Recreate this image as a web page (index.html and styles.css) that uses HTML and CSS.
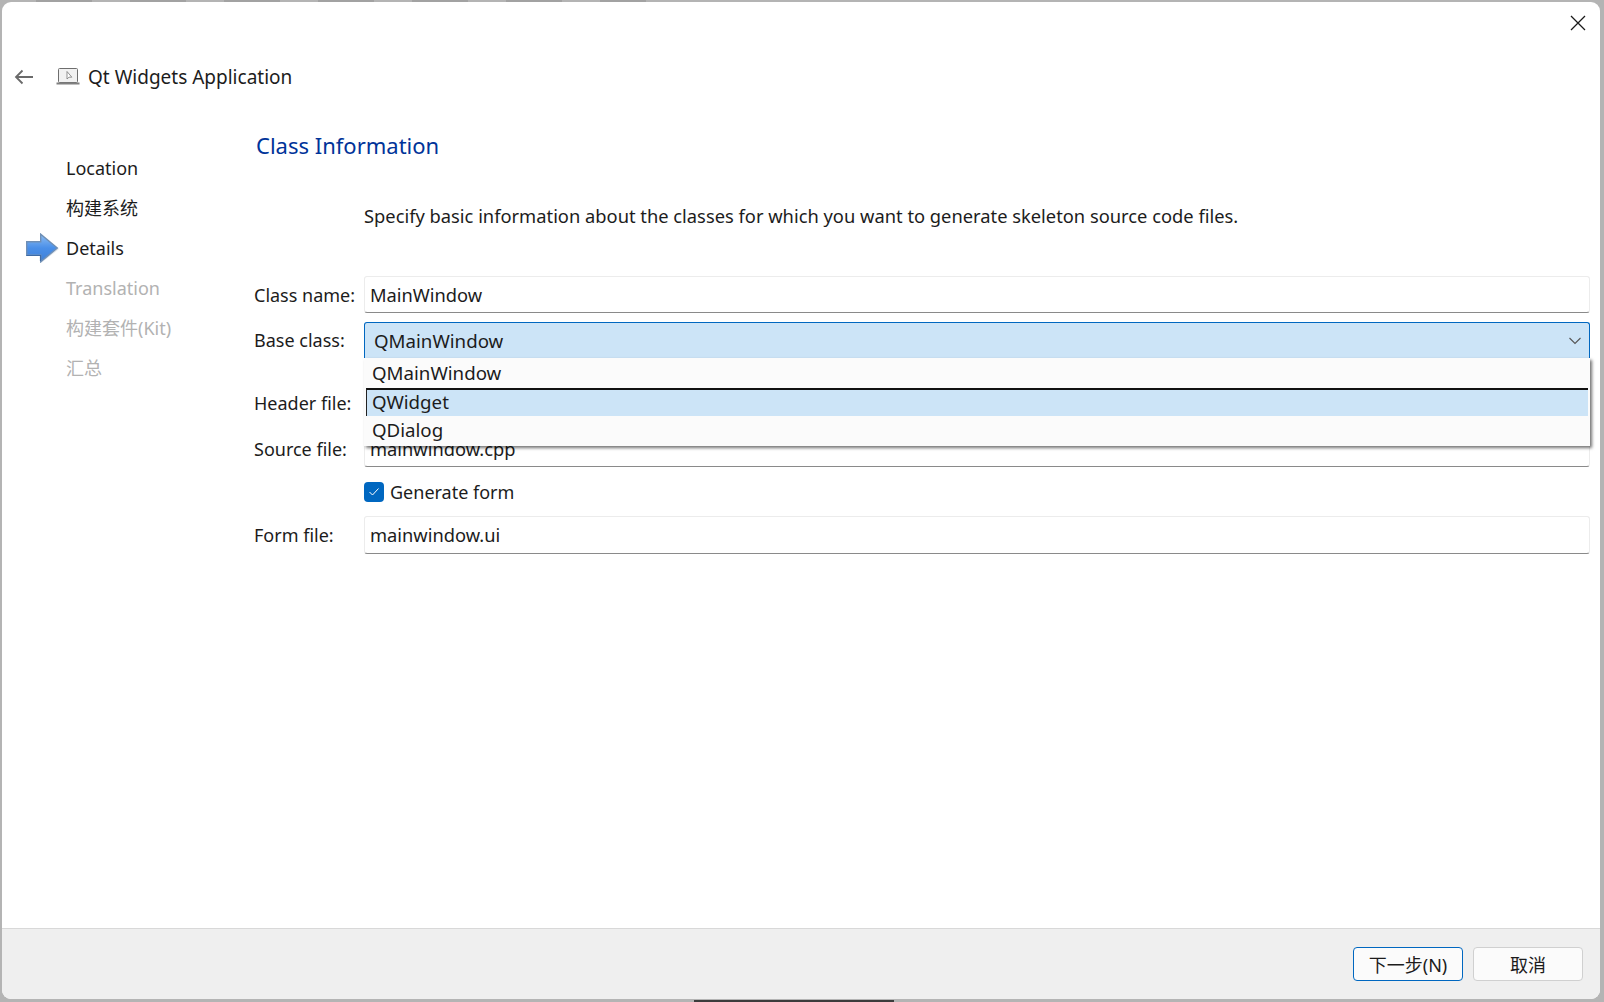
FILE: index.html
```html
<!DOCTYPE html>
<html lang="en">
<head>
    <meta charset="UTF-8">
    <title>Qt Widgets Application</title>
    <link rel="stylesheet" href="styles.css">
</head>
<body>
    <div class="window">
        <div class="wizard">
            <div class="titlebar">
                <svg class="close-icon" width="16" height="16" viewBox="0 0 16 16"><path d="M1 1L15 15M15 1L1 15" stroke="#1a1a1a" stroke-width="1.3" fill="none"/></svg>
            </div>
            <div class="header">
                <svg class="back-icon" width="20" height="16" viewBox="0 0 20 16"><path d="M19 8H2M8.500 1.500L2 8l6.500 6.500" stroke="#6a6a6a" stroke-width="1.800" fill="none"/></svg>
                <svg class="app-icon" width="24" height="18" viewBox="0 0 24 18">
                    <rect x="2.500" y="0.500" width="19" height="14" rx="1" fill="#f1f1f1" stroke="#6e6e6e"/>
                    <path d="M0.500 15.500H23.500" stroke="#808080" stroke-width="2" fill="none"/>
                    <path d="M11 3.500V11l2-1.800 2.800 0L11 3.500z" fill="#fff" stroke="#777" stroke-width="0.800"/>
                </svg>
                <span class="header-title">Qt Widgets Application</span>
            </div>
            <div class="main">
                <div class="sidebar">
                    <div class="step"><span class="step-mark"></span>Location</div>
                    <div class="step step-cjk"><span class="step-mark"></span>构建系统</div>
                    <div class="step">
                        <span class="step-mark">
                            <svg width="34" height="30" viewBox="0 0 34 30">
                                <defs>
                                    <linearGradient id="arrow-fill" x1="0" y1="0" x2="0" y2="1">
                                        <stop offset="0" stop-color="#8dbdf2"/>
                                        <stop offset="0.5" stop-color="#4a8fe8"/>
                                        <stop offset="1" stop-color="#3f7fd6"/>
                                    </linearGradient>
                                </defs>
                                <path d="M1 10H15V2.500L33 16 15 30V23H1z" fill="#c4ccd6" opacity="0.500"/>
                                <path d="M0.700 8.700H14.700V1.200L31.300 15 14.700 28.800V22.300H0.700z" fill="url(#arrow-fill)" stroke="#6f8fb5" stroke-width="1.400"/>
                                <path d="M0.500 22.500H14.500V28" stroke="#3d6aa5" stroke-width="1.200" fill="none"/>
                            </svg>
                        </span>
                        Details
                    </div>
                    <div class="step step-off"><span class="step-mark"></span>Translation</div>
                    <div class="step step-off step-cjk"><span class="step-mark"></span>构建套件(Kit)</div>
                    <div class="step step-off step-cjk"><span class="step-mark"></span>汇总</div>
                </div>
                <div class="content">
                    <h2 class="page-title">Class Information</h2>
                    <p class="description">Specify basic information about the classes for which you want to generate skeleton source code files.</p>
                    <div class="form">
                        <label>Class name:</label>
                        <input class="field" type="text" value="MainWindow">

                        <label>Base class:</label>
                        <div class="combo">
                            <span>QMainWindow</span>
                            <svg width="12" height="8" viewBox="0 0 12 8"><path d="M0.500 1L6 6.500 11.500 1" stroke="#555" stroke-width="1.100" fill="none"/></svg>
                            <div class="popup">
                                <div class="popup-item">QMainWindow</div>
                                <div class="popup-item popup-current">QWidget</div>
                                <div class="popup-item">QDialog</div>
                            </div>
                        </div>

                        <div class="form-spacer"></div>

                        <label>Header file:</label>
                        <input class="field" type="text" value="mainwindow.h">

                        <label>Source file:</label>
                        <input class="field" type="text" value="mainwindow.cpp">

                        <span></span>
                        <div class="check-row">
                            <span class="checkbox">
                                <svg width="12" height="10" viewBox="0 0 12 10"><path d="M1.500 5L4.500 8 10.500 1.500" stroke="#fff" stroke-width="1" fill="none"/></svg>
                            </span>
                            Generate form
                        </div>

                        <label>Form file:</label>
                        <input class="field field-form" type="text" value="mainwindow.ui">
                    </div>
                </div>
            </div>
        </div>
        <div class="footer">
            <button class="btn btn-default">下一步(N)</button>
            <button class="btn">取消</button>
        </div>
    </div>
</body>
</html>
```

FILE: styles.css
```css
html, body {
    height: 100%;
}
body {
    margin: 0;
    padding: 2px 4px 3px 2px;
    box-sizing: border-box;
    background:
        linear-gradient(#3c3c3c, #3c3c3c) 694px 1000px / 200px 2px no-repeat,
        repeating-linear-gradient(90deg, #a2a2a2 0, #a2a2a2 56px, transparent 56px, transparent 94px) 36px 0 / 610px 2px no-repeat,
        #b4b4b4;
    font-family: "Noto Sans", "Noto Sans CJK SC", sans-serif;
    font-size: 18px;
    color: #1c1c1c;
    overflow: hidden;
}
.window {
    height: 997px;
    background: #fff;
    border-radius: 9px;
    overflow: hidden;
    display: flex;
    flex-direction: column;
}
.wizard {
    flex: 1;
    display: flex;
    flex-direction: column;
}
.titlebar {
    height: 57px;
    padding: 13px 14px 0 0;
    box-sizing: border-box;
    display: flex;
    justify-content: flex-end;
    align-items: flex-start;
}
.header {
    height: 35px;
    display: flex;
    align-items: center;
    padding-left: 12px;
}
.back-icon {
    margin-right: 22px;
}
.app-icon {
    margin-right: 8px;
}
.header-title {
    font-size: 19px;
}
.main {
    flex: 1;
    display: flex;
    padding-top: 36px;
}
.sidebar {
    width: 252px;
    padding: 18px 0 0 24px;
    box-sizing: border-box;
}
.step {
    height: 40px;
    display: flex;
    align-items: center;
}
.step-cjk {
    padding-bottom: 2px;
    box-sizing: border-box;
}
.step-mark {
    width: 40px;
    display: flex;
    align-items: center;
}
.step-off {
    color: #b2b2b2;
}
.content {
    flex: 1;
    padding-right: 10px;
}
.page-title {
    margin: -1px 0 0 2px;
    font-size: 22px;
    font-weight: 400;
    color: #003399;
    line-height: 32px;
}
.description {
    margin: 42px 0 0 110px;
    font-size: 18.32px;
    line-height: 26px;
}
.form {
    margin-top: 47px;
    display: grid;
    grid-template-columns: 110px 1fr;
    grid-template-rows: 37px 36px 9px 36px 37px 31px 38px;
    row-gap: 9px;
    align-items: center;
}
.form-spacer {
    grid-column: 1 / 3;
}
.field {
    display: block;
    width: 100%;
    height: 100%;
    box-sizing: border-box;
    border: 1px solid #ececec;
    border-bottom-color: #8a8a8a;
    border-radius: 3px;
    padding: 0 5px;
    font: inherit;
    font-size: 18.3px;
    color: inherit;
    background: #fff;
    outline: none;
}
.field-form {
    padding-bottom: 2px;
}
.combo {
    position: relative;
    height: 100%;
    box-sizing: border-box;
    background: #cce4f7;
    border: 1px solid #0067c0;
    border-bottom: 0;
    border-radius: 3px 3px 0 0;
    padding: 0 8px 0 9px;
    font-size: 18.7px;
    display: flex;
    align-items: center;
    justify-content: space-between;
}
.popup {
    position: absolute;
    z-index: 2;
    top: 35px;
    left: -1px;
    right: -1px;
    height: 88px;
    background: #fbfbfb;
    box-shadow: 2px 2px 3px rgba(0, 0, 0, 0.55);
    padding-right: 2px;
    box-sizing: border-box;
}
.popup-item {
    height: 30px;
    line-height: 27px;
    padding-left: 8px;
}
.popup-item:first-child {
    line-height: 30px;
}
.popup-current {
    height: 28px;
    margin-left: 2px;
    padding-left: 5px;
    box-sizing: border-box;
    line-height: 23px;
    background: #cce4f7;
    border-top: 2px solid #111;
    border-left: 1px solid #222;
}
.check-row {
    display: flex;
    align-items: center;
    gap: 6px;
}
.checkbox {
    width: 20px;
    height: 20px;
    border-radius: 4px;
    background: #0067c0;
    display: flex;
    align-items: center;
    justify-content: center;
}
.footer {
    height: 71px;
    box-sizing: border-box;
    background: #efefef;
    border-top: 1px solid #d8d8d8;
    display: flex;
    justify-content: flex-end;
    align-items: flex-start;
    gap: 10px;
    padding: 18px 17px 0 0;
}
.btn {
    width: 110px;
    height: 34px;
    padding: 0;
    background: #fbfbfb;
    border: 1px solid #d0d0d0;
    border-radius: 4px;
    font: inherit;
    color: inherit;
}
.btn-default {
    border-color: #0067c0;
}
```
